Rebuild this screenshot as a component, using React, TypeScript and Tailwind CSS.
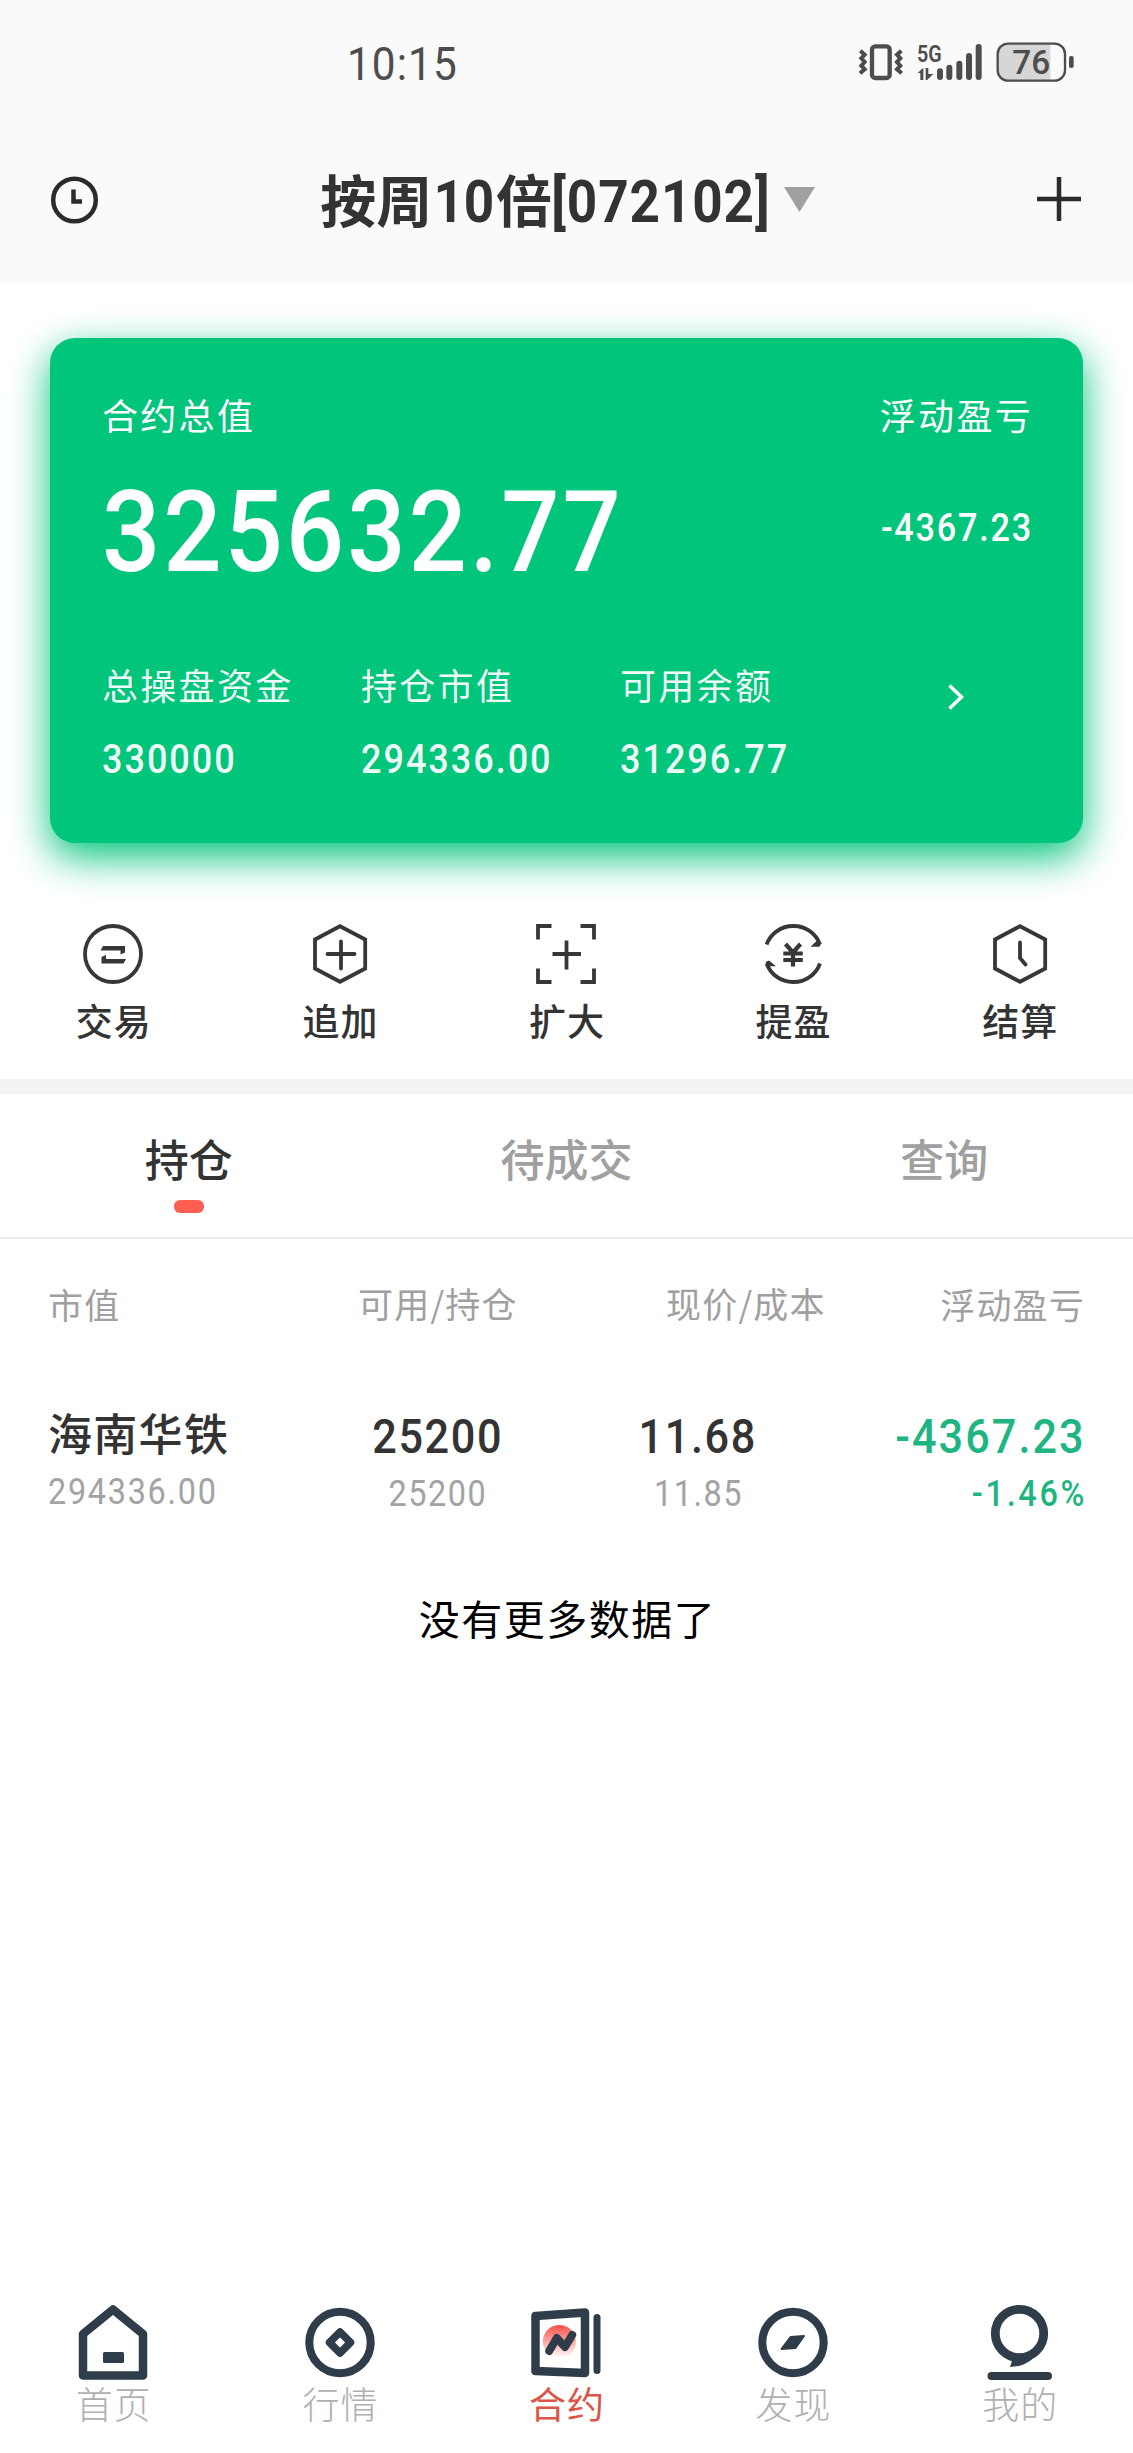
import React from 'react';
import clsx from 'clsx';

const ACTIVE = '合约';

// Digits use a slightly condensed Roboto
const Num = ({ children, className }: { children: React.ReactNode; className?: string }) => (
  <span className={clsx("block scale-x-90 whitespace-nowrap font-['Roboto',sans-serif] leading-none", className)}>
    {children}
  </span>
);

const StatusIcons = () => (
  <svg width="260" height="70" viewBox="0 0 780 210" fill="none" stroke="#4d4d4d">
    {/* vibrate */}
    <rect x="96" y="49" width="53" height="95" rx="10" strokeWidth="13" />
    <path d="M61 62l13 12-10 11 10 11-10 11 10 11-14 12M184 62l-13 12 10 11-10 11 10 11-10 11 14 12" strokeWidth="12" />
    {/* network */}
    <text x="231" y="96" fontSize="73" fontWeight="600" fontFamily="Roboto, sans-serif" textLength="74" lengthAdjust="spacingAndGlyphs" fill="#4d4d4d" stroke="none">5G</text>
    <path d="M233 129l17-16v37h-9v-21zM257 114h8v18h15l-19 18h-4z" fill="#4d4d4d" stroke="none" />
    <path d="M300 124v17M328 113v28M358 101v40M387 78v63M416 51v90" strokeWidth="18" strokeLinecap="round" />
    {/* battery */}
    <path d="M504 44h127v106H504a28 28 0 0 1-28-28V72a28 28 0 0 1 28-28z" fill="#d6d6d6" stroke="none" />
    <rect x="473" y="41" width="202" height="111" rx="31" strokeWidth="7" />
    <text x="517" y="131" fontSize="101" fontWeight="500" fontFamily="Roboto, sans-serif" textLength="114" lengthAdjust="spacingAndGlyphs" fill="#4d4d4d" stroke="none">76</text>
    <rect x="687" y="78" width="14" height="36" rx="6" fill="#4d4d4d" stroke="none" />
  </svg>
);

const actions = [
  {
    label: '交易',
    icon: (
      <>
        <circle cx="30" cy="30" r="28" />
        <path d="M17.500 26.500l2.500-4.500H42v6.500l-4.500 2v-4zM43 35l-2.500 4.500H18.500V33l4.500-2v4z" fill="#373737" stroke="none" />
      </>
    ),
  },
  { label: '追加', icon: <path d="M30 2.200L55.200 15.500V44.500L30 57.800L5 44.500V15.500ZM31 17.500V44.500M17.500 30H44.500" strokeLinecap="round" /> },
  { label: '扩大', icon: <path d="M2 15.500V2H15.500M44.500 2H58V15.500M58 44.500V58H44.500M15.500 58H2V44.500M30.500 16.500V45.500M16.500 30H45" /> },
  {
    label: '提盈',
    icon: (
      <>
        <path d="M3.600 20.500A28 28 0 0 1 30 2A28 28 0 0 1 57 20.500M3.600 39.500A28 28 0 0 0 30 58A28 28 0 0 0 57 39.500" />
        <path d="M22.500 20L30 28.500L37.500 20M30 28V42.500M20.300 29.500H39.800M20.300 36H39.800" strokeWidth="4.200" />
        <path d="M47.500 22.800L54 16.500L58 19.500L56.500 22.800ZM13 42.300L6 36.500L2.500 38L4 42.300Z" fill="#373737" stroke="none" />
      </>
    ),
  },
  { label: '结算', icon: <path d="M30 2.200L55.200 15.500V44.500L30 57.800L5 44.500V15.500ZM30 18.500V34L35.500 40.500" strokeLinecap="round" /> },
];

const navItems = [
  {
    label: '首页',
    icon: (
      <>
        <path d="M10 32L40 7.500L70 32V73.500H10Z" strokeWidth="8.500" />
        <rect x="30" y="50" width="21" height="11" rx="1.500" fill="#2f3c4a" stroke="none" />
      </>
    ),
  },
  {
    label: '行情',
    icon: (
      <>
        <circle cx="40" cy="40.500" r="30.700" strokeWidth="8" />
        <path d="M40 30L50.500 40.500L40 51L29.500 40.500Z" strokeWidth="7.500" />
      </>
    ),
  },
  {
    label: '合约',
    icon: (
      <>
        <defs>
          <linearGradient id="coin" x1="0" y1="0" x2="0" y2="1">
            <stop offset="0.050" stopColor="#f9584e" />
            <stop offset="1" stopColor="#fff" />
          </linearGradient>
        </defs>
        <circle cx="33.300" cy="39.500" r="16.500" fill="url(#coin)" stroke="none" />
        <path d="M9.500 14L59 10.500V71L9.500 69Z" strokeWidth="8.500" />
        <path d="M71 15.500V68.500" strokeWidth="7" strokeLinecap="round" />
        <path d="M23.200 49L30.800 36L39 45L46.200 33" strokeWidth="8" strokeLinecap="round" />
      </>
    ),
  },
  {
    label: '发现',
    icon: (
      <>
        <circle cx="40" cy="40.500" r="30.700" strokeWidth="8" />
        <path d="M28.500 47L37.500 35L51 34L42.500 46Z" fill="#2f3c4a" strokeWidth="2" />
      </>
    ),
  },
  {
    label: '我的',
    icon: (
      <>
        <circle cx="39.500" cy="31.500" r="24.200" strokeWidth="8.800" />
        <path d="M32 55V59L30 65C40 64.500 48 62 54 55Z" fill="#2f3c4a" stroke="none" />
        <path d="M11.500 74H68" strokeWidth="8" strokeLinecap="round" />
      </>
    ),
  },
];

const funds = [
  { label: '总操盘资金', value: '330000' },
  { label: '持仓市值', value: '294336.00' },
  { label: '可用余额', value: '31296.77' },
];

const App = () => {
  return (
    <div className="flex h-[2453px] w-[1133px] flex-col bg-white font-['Noto_Sans_CJK_SC',sans-serif] leading-none text-[#333]">
      {/* Status bar + title */}
      <header className="h-[283px] bg-[#fafafa]">
        <div className="flex h-[130px] items-start justify-between pl-[347px] pr-[33px] pt-[30px]">
          <Num className="mt-[10px] origin-left text-[47px] tracking-[1.200px] text-[#4d4d4d]">10:15</Num>
          <StatusIcons />
        </div>
        <div className="flex h-[138px] items-center justify-between pl-[50px] pr-[51px]">
          <svg width="49" height="49" viewBox="0 0 49 49" fill="none" stroke="#2b2b2b">
            <circle cx="24.500" cy="25" r="21.300" strokeWidth="4.500" />
            <path d="M23.500 14.500V26.500H32" strokeWidth="4.500" />
          </svg>
          <div className="flex items-center text-[56px] font-bold">
            <span className="-mt-[2px]">按周</span>
            <Num className="-mx-[2px] mt-[4px] text-[59px]">10</Num>
            <span className="-mt-[2px]">倍</span>
            <Num className="-ml-[13px] -mr-[19px] mt-[4px] text-[59px] tracking-[1px]">[072102]</Num>
            <svg className="ml-[20px]" width="31" height="25" viewBox="0 0 31 25">
              <path d="M0 0H31L15.500 25Z" fill="#a0a0a0" />
            </svg>
          </div>
          <svg width="46" height="46" viewBox="0 0 46 46" stroke="#2b2b2b" strokeWidth="4.500">
            <path d="M23 1V45M1 23H45" />
          </svg>
        </div>
      </header>

      {/* Account card */}
      <section className="mx-[50px] mt-[55px] h-[505px] rounded-[25px] bg-[#00c57b] pl-[52px] pr-[51px] pt-[58px] text-white shadow-[0_14px_40px_#00c57b]">
        <div className="flex justify-between">
          <div>
            <p className="text-[36px] tracking-[2.300px]">合约总值</p>
            <Num className="mt-[43px] origin-left text-[114px] font-medium tracking-[3.300px]">325632.77</Num>
          </div>
          <div className="text-right">
            <p className="-mr-[1px] text-[36px] tracking-[2.300px]">浮动盈亏</p>
            <Num className="-mr-px mt-[77px] origin-right text-[38px] font-medium tracking-[2px]">-4367.23</Num>
          </div>
        </div>
        <div className="mt-[77px] flex text-white/95">
          {funds.map((item) => (
            <div key={item.label} className="w-[259px]">
              <p className="whitespace-nowrap text-[36px] tracking-[2.300px]">{item.label}</p>
              <Num className="mt-[38px] origin-left text-[40px] font-medium tracking-[2.200px]">{item.value}</Num>
            </div>
          ))}
          <svg className="ml-[67px] mt-[17px]" width="20" height="28" viewBox="0 0 20 28" fill="none" stroke="#fff" strokeWidth="3.500">
            <path d="M3.500 2.500L15.500 14L3.500 25.500" />
          </svg>
        </div>
      </section>

      {/* Quick actions */}
      <section className="mt-[81px] grid h-[155px] grid-cols-5">
        {actions.map((item) => (
          <div key={item.label} className="flex flex-col items-center">
            <svg width="60" height="60" viewBox="0 0 60 60" fill="none" stroke="#373737" strokeWidth="3.800">
              {item.icon}
            </svg>
            <span className="mt-[18px] pl-px text-[37px] font-medium tracking-[1px]">{item.label}</span>
          </div>
        ))}
      </section>
      <div className="h-[15px] bg-[#f3f3f3]" />

      {/* Tabs */}
      <nav className="grid h-[145px] grid-cols-3 border-b-2 border-[#ececec] text-[44px] font-medium text-[#a0a0a0]">
        <div className="flex flex-col items-center pt-[42px] text-[#333]">
          <span>持仓</span>
          <i className="mt-[20px] h-[13px] w-[30px] rounded-[6px] bg-[#fe5f50]" />
        </div>
        <div className="pt-[42px] text-center">待成交</div>
        <div className="pt-[42px] text-center">查询</div>
      </nav>

      {/* Positions */}
      <div className="flex px-[48px] pt-[46px] text-[35px] tracking-[1.200px] text-[#a0a0a0]">
        <span className="w-[310px] pt-px">市值</span>
        <span className="w-[308px]">可用/持仓</span>
        <span className="flex-1">现价/成本</span>
        <span className="pt-px">浮动盈亏</span>
      </div>
      <div className="mt-[89px] flex h-[96px] pl-[48px] pr-[47px]">
        <div className="w-[300px]">
          <p className="text-[44px] font-medium tracking-[1.300px]">海南华铁</p>
          <Num className="mt-[20px] origin-left text-[36px] tracking-[1.900px] text-[#a3a3a3]">294336.00</Num>
        </div>
        <div className="flex w-[180px] flex-col items-center">
          <Num className="mt-[3px] text-[48px] font-medium tracking-[1.800px]">25200</Num>
          <Num className="mt-[15px] text-[36px] tracking-[1.700px] text-[#a3a3a3]">25200</Num>
        </div>
        <div className="flex w-[340px] flex-col items-center">
          <Num className="mt-[3px] text-[48px] font-medium tracking-[1.800px]">11.68</Num>
          <Num className="mt-[15px] text-[36px] tracking-[1.700px] text-[#a3a3a3]">11.85</Num>
        </div>
        <div className="flex flex-1 flex-col items-end text-[#1fb582]">
          <Num className="mt-[3px] origin-right text-[48px] font-medium tracking-[2.300px]">-4367.23</Num>
          <Num className="-mr-px mt-[15px] origin-right text-[36px] font-medium tracking-[3px]">-1.46%</Num>
        </div>
      </div>
      <p className="mt-[91px] pl-[2px] text-center text-[41px] tracking-[1.500px] text-black">没有更多数据了</p>

      {/* Bottom navigation */}
      <nav className="mt-auto grid h-[151px] grid-cols-5">
        {navItems.map((item) => (
          <div key={item.label} className="flex flex-col items-center">
            <svg width="80" height="80" viewBox="0 0 80 80" fill="none" stroke="#2f3c4a" strokeLinejoin="round">
              {item.icon}
            </svg>
            <span className={clsx('mt-[3px] pl-px text-[37px] tracking-[1px]', item.label === ACTIVE ? 'text-[#db5549]' : 'font-light text-[#b0b0b0]')}>
              {item.label}
            </span>
          </div>
        ))}
      </nav>
    </div>
  );
};

export default App;
